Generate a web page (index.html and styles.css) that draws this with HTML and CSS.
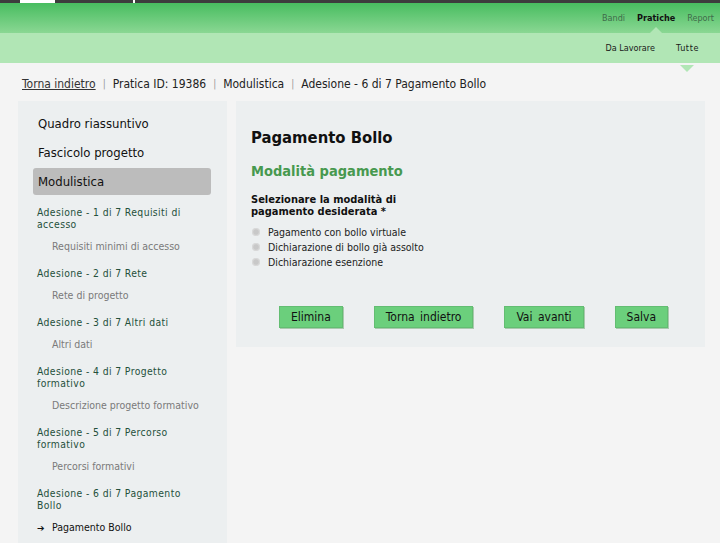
FILE: index.html
```html
<!DOCTYPE html>
<html lang="it">
<head>
<meta charset="utf-8">
<title>Pagamento Bollo</title>
<link rel="stylesheet" href="styles.css">
</head>
<body>
<header class="header">
  <div class="topbar"><span class="logo-a"></span><span class="logo-b"></span></div>
  <nav class="mainnav">
    <a class="nav-item">Bandi</a>
    <a class="nav-item active">Pratiche</a>
    <a class="nav-item">Report</a>
  </nav>
  <nav class="subnav">
    <a class="sub-item">Da Lavorare</a>
    <a class="sub-item active">Tutte</a>
  </nav>
</header>
<div class="breadcrumb">
  <a class="crumb-link">Torna indietro</a><span class="sep">|</span><span>Pratica ID: 19386</span><span class="sep">|</span><span>Modulistica</span><span class="sep">|</span><span>Adesione - 6 di 7 Pagamento Bollo</span>
</div>
<div class="content">
  <aside class="sidebar">
    <div class="side-item">Quadro riassuntivo</div>
    <div class="side-item">Fascicolo progetto</div>
    <div class="side-item selected">Modulistica</div>
    <div class="group first">
      <div class="group-title">Adesione - 1 di 7 Requisiti di<br>accesso</div>
      <div class="group-sub">Requisiti minimi di accesso</div>
    </div>
    <div class="group">
      <div class="group-title">Adesione - 2 di 7 Rete</div>
      <div class="group-sub">Rete di progetto</div>
    </div>
    <div class="group">
      <div class="group-title">Adesione - 3 di 7 Altri dati</div>
      <div class="group-sub">Altri dati</div>
    </div>
    <div class="group">
      <div class="group-title">Adesione - 4 di 7 Progetto<br>formativo</div>
      <div class="group-sub">Descrizione progetto formativo</div>
    </div>
    <div class="group">
      <div class="group-title">Adesione - 5 di 7 Percorso<br>formativo</div>
      <div class="group-sub">Percorsi formativi</div>
    </div>
    <div class="group">
      <div class="group-title">Adesione - 6 di 7 Pagamento<br>Bollo</div>
      <div class="group-sub current"><span class="arrow">➔</span>Pagamento Bollo</div>
    </div>
  </aside>
  <main class="panel">
    <h1 class="title">Pagamento Bollo</h1>
    <h2 class="subtitle">Modalità pagamento</h2>
    <div class="field-label">Selezionare la modalità di<br>pagamento desiderata *</div>
    <ul class="radios">
      <li><span class="radio"></span>Pagamento con bollo virtuale</li>
      <li><span class="radio"></span>Dichiarazione di bollo già assolto</li>
      <li><span class="radio"></span>Dichiarazione esenzione</li>
    </ul>
    <div class="actions">
      <button class="btn">Elimina</button>
      <button class="btn">Torna indietro</button>
      <button class="btn">Vai avanti</button>
      <button class="btn">Salva</button>
    </div>
  </main>
</div>
</body>
</html>
```
FILE: styles.css
```css
* { box-sizing: border-box; }
html, body { margin: 0; padding: 0; }
body {
  background: #f4f4f4;
  font-family: "DejaVu Sans Condensed", sans-serif;
  color: #1a1a1a;
  height: 543px;
  overflow: hidden;
}
.topbar {
  height: 3px;
  background: #3d3d3d;
  display: flex;
}
.logo-a { width: 35px; margin-left: 20px; background: #ffffff; }
.logo-b { width: 2px; margin-left: 78px; background: #ffffff; }
.mainnav {
  height: 30px;
  background: linear-gradient(#48bd60, #8ad793);
  display: flex;
  justify-content: flex-end;
  align-items: center;
  gap: 12px;
  padding-right: 6px;
}
.nav-item {
  font-size: 9px;
  color: #3f6b4a;
  position: relative;
}
.nav-item.active { color: #111; font-weight: bold; }
.nav-item.active::after {
  content: "";
  position: absolute;
  left: 50%;
  bottom: -10px;
  margin-left: -6px;
  border: 6px solid transparent;
  border-bottom-color: #b1e6b5;
  border-top-width: 0;
}
.subnav {
  height: 30px;
  background: #b1e6b5;
  display: flex;
  justify-content: flex-end;
  align-items: center;
  gap: 21px;
  padding-right: 21px;
}
.sub-item {
  font-size: 9px;
  color: #1a1a1a;
  position: relative;
}
.sub-item.active { letter-spacing: 0.6px; }
.sub-item.active::after {
  content: "";
  position: absolute;
  left: 50%;
  top: 22px;
  margin-left: -7px;
  border: 7px solid transparent;
  border-top-color: #b1e6b5;
  border-bottom-width: 0;
}
.breadcrumb {
  height: 38px;
  padding: 3px 0 0 22px;
  display: flex;
  align-items: center;
  font-size: 12px;
  color: #222;
}
.crumb-link { text-decoration: underline; color: #333; }
.sep { color: #999; margin: 0 7px; font-size: 10px; }
.content {
  display: flex;
  gap: 9px;
  padding-left: 18px;
}
.sidebar {
  width: 209px;
  height: 442px;
  background: #eceff0;
  padding: 9px 16px 0 15px;
}
.side-item {
  height: 27px;
  line-height: 27px;
  margin-bottom: 2px;
  padding-left: 5px;
  font-size: 13px;
  color: #111;
  border-radius: 3px;
}
.side-item.selected { background: #bcbcbc; }
.group { margin-top: 14.5px; padding-left: 4px; }
.group.first { margin-top: 11px; }
.group-title {
  font-size: 10.3px;
  line-height: 12px;
  letter-spacing: 0.4px;
  color: #24503b;
}
.group-sub {
  margin-top: 8.5px;
  padding-left: 15px;
  font-size: 10.5px;
  line-height: 14px;
  color: #7a7a7a;
}
.group-sub.current { padding-left: 0; color: #111; }
.arrow { display: inline-block; width: 15px; font-size: 9px; font-family: "DejaVu Sans", sans-serif; }
.panel {
  width: 469px;
  height: 246px;
  background: #eceff0;
  padding: 26px 15px 0 15px;
}
.title {
  margin: 0;
  font-size: 16.5px;
  line-height: 22px;
  font-weight: bold;
  color: #111;
}
.subtitle {
  margin: 12px 0 0;
  font-size: 14.5px;
  line-height: 20px;
  font-weight: bold;
  color: #47994f;
}
.field-label {
  margin-top: 13px;
  font-size: 11px;
  line-height: 12px;
  font-weight: bold;
  color: #111;
}
.radios {
  list-style: none;
  margin: 6.5px 0 0;
  padding: 0 0 0 1px;
}
.radios li {
  height: 15px;
  display: flex;
  align-items: center;
  font-size: 10.5px;
  color: #222;
}
.radio {
  width: 8px;
  height: 8px;
  border-radius: 50%;
  background: radial-gradient(circle, #c8c8c8 0 40%, #d9d9d9 60%, #bdbdbd 100%);
  margin-right: 8px;
}
.actions {
  margin-top: 36.5px;
  display: flex;
  gap: 31px;
  padding-left: 28px;
}
.btn {
  height: 22px;
  padding: 0 11px;
  background: #6bcf7c;
  border: 1px solid #63bd72;
  box-shadow: 1px 1px 0 #a9c9ad;
  font-family: "DejaVu Sans Condensed", sans-serif;
  font-size: 12px;
  word-spacing: 2px;
  color: #111;
}
```
